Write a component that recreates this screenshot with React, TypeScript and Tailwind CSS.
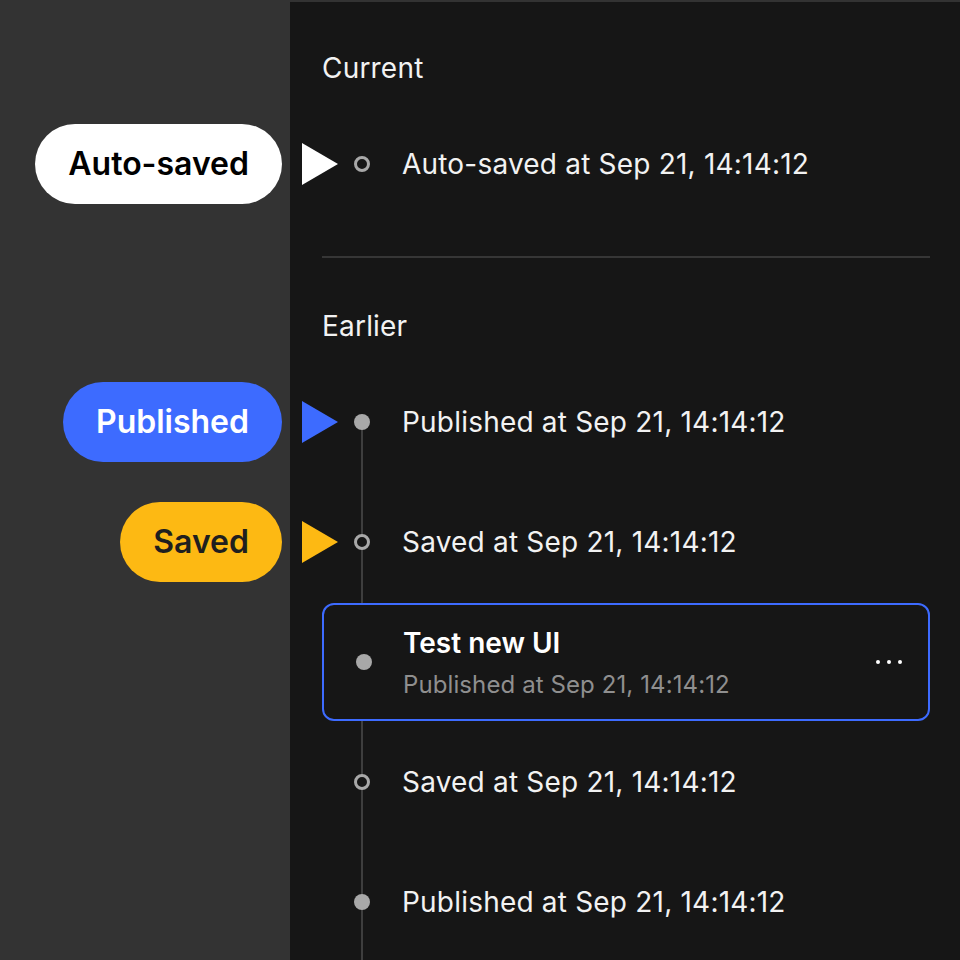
import React from 'react';

type Kind = 'auto' | 'published' | 'saved';

const labelStyles: Record<Kind, { pill: string; tri: string; text: string }> = {
  auto: { pill: 'bg-white text-black', tri: 'border-l-white', text: 'Auto-saved' },
  published: { pill: 'bg-[#3d6bff] text-white', tri: 'border-l-[#3d6bff]', text: 'Published' },
  saved: { pill: 'bg-[#fdb913] text-[#1f1f1f]', tri: 'border-l-[#fdb913]', text: 'Saved' },
};

const Dot = ({ hollow }: { hollow?: boolean }) => (
  <span
    className={
      hollow
        ? 'relative z-10 block w-[16px] h-[16px] rounded-full border-[3px] border-[#a8a8a8] bg-[#161616]'
        : 'relative z-10 block w-[16px] h-[16px] rounded-full bg-[#a8a8a8]'
    }
  />
);

const Label = ({ kind }: { kind?: Kind }) => (
  <div className="flex items-center justify-end pr-[8px]">
    {kind && (
      <span
        className={`h-[80px] px-[33px] rounded-full flex items-center text-[32px] font-semibold ${labelStyles[kind].pill}`}
      >
        {labelStyles[kind].text}
      </span>
    )}
  </div>
);

const Row = ({ kind, hollow, text }: { kind?: Kind; hollow?: boolean; text: string }) => (
  <div className="grid grid-cols-[290px_1fr] h-[120px]">
    <Label kind={kind} />
    <div className="relative flex items-center pl-[32px]">
      {kind && (
        <span
          className={`absolute left-[12px] top-1/2 -translate-y-1/2 w-0 h-0 border-y-[21px] border-y-transparent border-l-[36px] ${labelStyles[kind].tri}`}
        />
      )}
      <div className="w-[80px] flex justify-center">
        <Dot hollow={hollow} />
      </div>
      <span className="text-[28px] tracking-[0.2px] text-[#f2f2f2]">{text}</span>
    </div>
  </div>
);

const Header = ({ title, className }: { title: string; className: string }) => (
  <div className={`grid grid-cols-[290px_1fr] ${className}`}>
    <div />
    <div className="flex items-center pl-[32px] text-[28px] tracking-[0.2px] text-[#f2f2f2]">{title}</div>
  </div>
);

export default function App() {
  const stamp = 'at Sep 21, 14:14:12';
  return (
    <div
      className="w-[960px] h-[960px] overflow-hidden bg-[#333333] pt-[2px]"
      style={{ fontFamily: 'Inter, "Noto Sans", sans-serif' }}
    >
      <div className="h-full bg-[linear-gradient(to_right,#333333_290px,#161616_290px)]">
        <Header title="Current" className="h-[102px] [&>div:last-child]:pt-[30px]" />
        <Row kind="auto" hollow text={`Auto-saved ${stamp}`} />
        <div className="grid grid-cols-[290px_1fr]">
          <div />
          <div className="pl-[32px] pr-[30px] pt-[32px]">
            <div className="h-[2px] bg-[#363636]" />
          </div>
        </div>
        <Header title="Earlier" className="h-[104px] [&>div:last-child]:pt-[32px]" />
        <div className="relative">
          <span className="absolute left-[361px] top-[60px] bottom-0 w-[2px] bg-[#3e3e3e]" />
          <Row kind="published" text={`Published ${stamp}`} />
          <Row kind="saved" hollow text={`Saved ${stamp}`} />
          <div className="grid grid-cols-[290px_1fr] h-[120px]">
            <div />
            <div className="pl-[32px] pr-[30px] py-[1px]">
              <div className="relative z-10 h-full bg-[#161616] border-2 border-[#3d6bff] rounded-[12px] flex items-center">
                <div className="w-[79px] flex justify-center">
                  <Dot />
                </div>
                <div className="flex-1 flex flex-col gap-[10px] pt-[2px]">
                  <span className="text-[28px] font-semibold text-white leading-[34px]">Test new UI</span>
                  <span className="text-[24px] text-[#8f8f8f] leading-[30px] tracking-[0.1px]">
                    Published {stamp}
                  </span>
                </div>
                <div className="flex gap-[7px] pr-[26px]">
                  <span className="w-[4px] h-[4px] rounded-full bg-white" />
                  <span className="w-[4px] h-[4px] rounded-full bg-white" />
                  <span className="w-[4px] h-[4px] rounded-full bg-white" />
                </div>
              </div>
            </div>
          </div>
          <Row hollow text={`Saved ${stamp}`} />
          <Row text={`Published ${stamp}`} />
        </div>
      </div>
    </div>
  );
}
